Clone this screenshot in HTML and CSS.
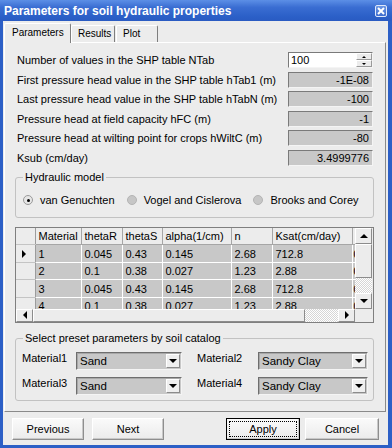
FILE: index.html
```html
<!DOCTYPE html>
<html lang="en">
<head>
    <meta charset="UTF-8">
    <meta name="viewport" content="width=device-width, initial-scale=1.0">
    <title>Parameters for soil hydraulic properties</title>
    <link rel="stylesheet" href="styles.css">
</head>
<body>

<div class="window">
    <div class="titlebar">
        <span class="title">Parameters for soil hydraulic properties</span>
        <span class="close-btn">
            <svg width="10" height="10" viewBox="0 0 10 10"><path d="M2 2 L8 8 M8 2 L2 8" stroke="#fff" stroke-width="2"/></svg>
        </span>
    </div>

    <div class="frame">
        <div class="tabs">
            <div class="tab active">Parameters</div>
            <div class="tab results">Results</div>
            <div class="tab plot">Plot</div>
        </div>

        <div class="tab-page">

            <!-- SHP table settings -->
            <div class="fields">
                <div class="field">
                    <span>Number of values in the SHP table NTab</span>
                    <div class="spin">
                        <span>100</span>
                        <div class="spin-btns">
                            <span class="spin-btn"><i class="tri-up small"></i></span>
                            <span class="spin-btn"><i class="tri-down small"></i></span>
                        </div>
                    </div>
                </div>
                <div class="field">
                    <span>First pressure head value in the SHP table hTab1 (m)</span>
                    <div class="value">-1E-08</div>
                </div>
                <div class="field">
                    <span>Last pressure head value in the SHP table hTabN (m)</span>
                    <div class="value">-100</div>
                </div>
                <div class="field">
                    <span>Pressure head at field capacity hFC (m)</span>
                    <div class="value">-1</div>
                </div>
                <div class="field">
                    <span>Pressure head at wilting point for crops hWiltC (m)</span>
                    <div class="value">-80</div>
                </div>
                <div class="field">
                    <span>Ksub (cm/day)</span>
                    <div class="value">3.4999776</div>
                </div>
            </div>

            <!-- Model choice -->
            <fieldset class="group hydraulic">
                <legend>Hydraulic model</legend>
                <div class="radios">
                    <span class="radio checked"><i class="dot"></i>van Genuchten</span>
                    <span class="radio"><i class="dot"></i>Vogel and Cislerova</span>
                    <span class="radio"><i class="dot"></i>Brooks and Corey</span>
                </div>
            </fieldset>

            <!-- Material table -->
            <div class="grid">
                <div class="grid-body">
                    <div class="viewport">
                        <table>
                            <colgroup>
                                <col style="width:19px">
                                <col style="width:46px">
                                <col style="width:41px">
                                <col style="width:40px">
                                <col style="width:69px">
                                <col style="width:41px">
                                <col style="width:80px">
                                <col style="width:40px">
                            </colgroup>
                            <thead>
                                <tr>
                                    <th class="row-head"></th>
                                    <th>Material</th>
                                    <th>thetaR</th>
                                    <th>thetaS</th>
                                    <th>alpha(1/cm)</th>
                                    <th>n</th>
                                    <th>Ksat(cm/day)</th>
                                    <th class="clip"></th>
                                </tr>
                            </thead>
                            <tbody>
                                <tr>
                                    <td class="row-head"><i class="tri-right"></i></td>
                                    <td>1</td><td>0.045</td><td>0.43</td><td>0.145</td><td>2.68</td><td>712.8</td><td class="clip">0.5</td>
                                </tr>
                                <tr>
                                    <td class="row-head"></td>
                                    <td>2</td><td>0.1</td><td>0.38</td><td>0.027</td><td>1.23</td><td>2.88</td><td class="clip">0.5</td>
                                </tr>
                                <tr>
                                    <td class="row-head"></td>
                                    <td>3</td><td>0.045</td><td>0.43</td><td>0.145</td><td>2.68</td><td>712.8</td><td class="clip">0.5</td>
                                </tr>
                                <tr>
                                    <td class="row-head"></td>
                                    <td>4</td><td>0.1</td><td>0.38</td><td>0.027</td><td>1.23</td><td>2.88</td><td class="clip">0.5</td>
                                </tr>
                            </tbody>
                        </table>
                    </div>
                    <div class="vscroll">
                        <span class="sb-btn v"><i class="tri-up"></i></span>
                        <span class="sb-thumb vthumb"></span>
                        <span class="sb-track"></span>
                        <span class="sb-btn v"><i class="tri-down"></i></span>
                    </div>
                </div>
                <div class="hscroll-row">
                    <div class="hscroll">
                        <span class="sb-btn h"><i class="tri-left"></i></span>
                        <span class="sb-thumb hthumb"></span>
                        <span class="sb-track"></span>
                        <span class="sb-btn h"><i class="tri-right"></i></span>
                    </div>
                    <div class="corner"></div>
                </div>
            </div>

            <!-- Soil catalog -->
            <fieldset class="group catalog">
                <legend>Select preset parameters by soil catalog</legend>
                <div class="cat-row">
                    <span class="cat-label">Material1</span>
                    <div class="combo narrow"><span>Sand</span><span class="combo-btn"><i class="tri-down"></i></span></div>
                    <span class="cat-label second">Material2</span>
                    <div class="combo"><span>Sandy Clay</span><span class="combo-btn"><i class="tri-down"></i></span></div>
                </div>
                <div class="cat-row">
                    <span class="cat-label">Material3</span>
                    <div class="combo narrow"><span>Sand</span><span class="combo-btn"><i class="tri-down"></i></span></div>
                    <span class="cat-label second">Material4</span>
                    <div class="combo"><span>Sandy Clay</span><span class="combo-btn"><i class="tri-down"></i></span></div>
                </div>
            </fieldset>

        </div>

        <div class="buttons">
            <button type="button">Previous</button>
            <button type="button">Next</button>
            <button type="button" class="default push-right">Apply</button>
            <button type="button" class="cancel">Cancel</button>
        </div>
    </div>
</div>

</body>
</html>
```

FILE: styles.css
```css
/* Base */
* {
    box-sizing: border-box;
}

body {
    margin: 0;
    font-family: "Liberation Sans", Arial, sans-serif;
    font-size: 11px;
    color: #000;
    background: #2c5fc6;
}

.window {
    width: 392px;
    height: 448px;
    overflow: hidden;
    background: #ececec;
}

/* Title bar */
.titlebar {
    height: 21px;
    display: flex;
    align-items: center;
    justify-content: space-between;
    padding: 0 5px 0 4px;
    color: #fff;
    font-weight: bold;
    font-size: 12px;
    background: linear-gradient(#5c8fe6, #3a6dd2 35%, #2b5fc7 80%, #2a5bc2);
}

.close-btn {
    width: 12px;
    height: 12px;
    display: flex;
    align-items: center;
    justify-content: center;
    border: 1px solid #dfe8fa;
    border-radius: 2px;
    background: linear-gradient(#6c97e4, #3d6cd0);
}

.frame {
    height: 427px;
    border: solid #2c5fc6;
    border-width: 0 4px 3px 3px;
    padding: 0 2px 0 1px;
    background: #ececec;
}

/* Tabs */
.tabs {
    height: 21px;
    display: flex;
    align-items: flex-end;
    position: relative;
    z-index: 1;
    font-size: 10px;
}

.tab {
    height: 17px;
    line-height: 15px;
    border: 1px solid;
    border-color: #fff #7e7e7e #7e7e7e #fff;
    border-bottom: none;
    border-radius: 2px 2px 0 0;
    padding-left: 6px;
}

.tab.active {
    width: 67px;
    height: 20px;
    margin-bottom: -1px;
    line-height: 17px;
    padding-left: 7px;
    background: #ececec;
}

.tab.results {
    width: 44px;
}

.tab.plot {
    width: 42px;
    margin-left: 1px;
}

/* Tab page */
.tab-page {
    height: 370px;
    border: 1px solid;
    border-color: #fff #8a8a8a #8a8a8a #fff;
    padding: 9px 12px 0 12px;
}

.fields {
    display: flex;
    flex-direction: column;
    gap: 3.6px;
}

.field {
    height: 16px;
    display: flex;
    align-items: center;
    justify-content: space-between;
}

.value,
.spin {
    width: 85px;
    height: 16px;
    border: 1px solid;
    border-color: #7a7a7a #f4f4f4 #f4f4f4 #7a7a7a;
    line-height: 14px;
}

.value {
    background: #c8c8c8;
    text-align: right;
    padding-right: 3px;
}

.spin {
    background: #fff;
    display: flex;
    justify-content: space-between;
    padding-left: 2px;
}

.spin-btns {
    width: 16px;
    display: flex;
    flex-direction: column;
}

.spin-btn {
    flex: 1;
    display: flex;
    align-items: center;
    justify-content: center;
    background: #ececec;
    border: 1px solid;
    border-color: #fff #9a9a9a #9a9a9a #fff;
}

/* Triangles */
.tri-up,
.tri-down,
.tri-left,
.tri-right {
    display: block;
    width: 0;
    height: 0;
    border: 0 solid transparent;
}

.tri-up {
    border-width: 0 4px 4px;
    border-bottom-color: #000;
}

.tri-down {
    border-width: 4px 4px 0;
    border-top-color: #000;
}

.tri-up.small {
    border-width: 0 2px 2px;
}

.tri-down.small {
    border-width: 2px 2px 0;
}

.tri-left {
    border-width: 4px 4px 4px 0;
    border-right-color: #000;
}

.tri-right {
    border-width: 4px 0 4px 4px;
    border-left-color: #000;
}

/* Group boxes */
.group {
    margin: 0 -1px 0 -2px;
    border: 1px solid #c2c2c2;
    border-radius: 3px;
    min-width: 0;
}

.group legend {
    padding: 0 2px;
    line-height: 13px;
}

.hydraulic {
    margin-top: 5px;
    padding: 10px 0 10px 7px;
}

.radios {
    height: 13px;
    display: flex;
    align-items: center;
    gap: 12px;
}

.radio {
    display: flex;
    align-items: center;
    gap: 7px;
}

.dot {
    width: 10px;
    height: 10px;
    border-radius: 50%;
    border: 1px solid #b4b4b4;
    background: #c6c6c6;
    position: relative;
}

.radio.checked .dot {
    background: #e6e6e6;
    border-color: #9a9a9a;
}

.radio.checked .dot::after {
    content: "";
    position: absolute;
    left: 2.5px;
    top: 2.5px;
    width: 3px;
    height: 3px;
    border-radius: 50%;
    background: #000;
}

/* Data grid */
.grid {
    margin: 9px -1px 0 -2px;
    height: 96px;
    border: 1px solid #7f7f7f;
    background: #ececec;
}

.grid-body {
    height: 81px;
    display: flex;
}

.viewport {
    width: 339px;
    overflow: hidden;
}

.grid table {
    table-layout: fixed;
    width: 376px;
    border-collapse: collapse;
}

.grid th,
.grid td {
    padding: 0 0 0 3px;
    text-align: left;
    font-weight: normal;
    white-space: nowrap;
    overflow: hidden;
}

.grid th {
    height: 17px;
    border-right: 1px solid #a6a6a6;
    border-bottom: 1px solid #a6a6a6;
    background: #ececec;
}

.grid td {
    height: 17.5px;
    background: #c8c8c8;
    border-right: 1px solid #fff;
    border-bottom: 1px solid #fff;
}

.grid .row-head {
    background: #ececec;
    border-right: 1px solid #9c9c9c;
    border-bottom: 1px solid #c4c4c4;
    padding-left: 6px;
}

.grid td.clip {
    padding-left: 1px;
}

.vscroll {
    width: 17px;
    display: flex;
    flex-direction: column;
}

.sb-btn {
    display: flex;
    align-items: center;
    justify-content: center;
    background: #ececec;
    border: 1px solid;
    border-color: #fff #8c8c8c #8c8c8c #fff;
}

.sb-btn.v {
    height: 16px;
}

.sb-btn.h {
    width: 17px;
}

.sb-thumb {
    background: #ececec;
    border: 1px solid;
    border-color: #fff #8c8c8c #8c8c8c #fff;
}

.vthumb {
    height: 34px;
}

.hthumb {
    width: 272px;
}

.sb-track {
    flex: 1;
    background: repeating-conic-gradient(#fff 0 25%, #d6d6d6 0 50%) 0 0 / 2px 2px;
}

.hscroll-row {
    height: 13px;
    display: flex;
}

.hscroll {
    width: 339px;
    display: flex;
}

.corner {
    flex: 1;
    background: #ececec;
}

/* Soil catalog */
.catalog {
    margin-top: 9.5px;
    padding: 6.5px 0 5px 6px;
}

.catalog legend {
    margin-left: 1px;
}

.cat-row {
    display: flex;
    align-items: flex-start;
}

.cat-row + .cat-row {
    margin-top: 7px;
}

.cat-label {
    width: 54px;
    line-height: 12px;
}

.cat-label.second {
    width: 61px;
    margin-left: 15px;
}

.combo {
    width: 110px;
    height: 18px;
    display: flex;
    align-items: center;
    justify-content: space-between;
    padding: 0 1px 0 3px;
    background: #c8c8c8;
    border: 1px solid;
    border-color: #6e6e6e #f4f4f4 #f4f4f4 #6e6e6e;
    box-shadow: inset 1px 1px 0 #a8a8a8;
    font-size: 11.5px;
}

.combo.narrow {
    width: 106px;
}

.combo-btn {
    width: 14px;
    height: 14px;
    display: flex;
    align-items: center;
    justify-content: center;
    background: #efefef;
    border: 1px solid;
    border-color: #fff #8c8c8c #8c8c8c #fff;
}

/* Dialog buttons */
.buttons {
    display: flex;
    gap: 8px;
    margin-top: 6px;
    padding: 0 7px 0 8px;
}

button {
    width: 72px;
    height: 22px;
    padding: 0;
    font-family: inherit;
    font-size: 11px;
    color: #000;
    background: linear-gradient(#fafafa, #ebebeb);
    border: 1px solid;
    border-color: #fff #8e8e8e #8e8e8e #fff;
    box-shadow: inset -1px -1px 0 #c8c8c8;
}

button.push-right {
    margin-left: auto;
}

button.default {
    width: 74px;
    border: 1px solid #000;
    outline: 1px dotted #000;
    outline-offset: -4px;
}

button.cancel {
    width: 74px;
    margin-left: -3px;
}
```
